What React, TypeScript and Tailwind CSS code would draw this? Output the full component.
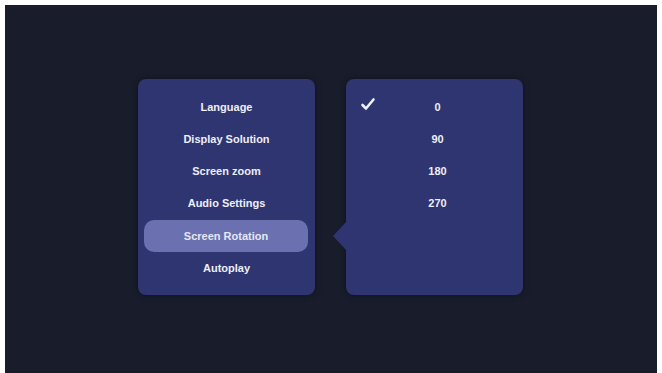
import React from "react";

const left = ["Language", "Display Solution", "Screen zoom", "Audio Settings", "Screen Rotation", "Autoplay"];
const right = ["0", "90", "180", "270"];

export default function App() {
  return (
    <div className="w-[662px] h-[373px] bg-white flex flex-col pt-[5px] pl-[5px] pr-[5px] overflow-hidden" style={{ fontFamily: '"Liberation Sans", Arial, sans-serif' }}>
      <div className="flex-1 bg-[#191c2b] flex items-start pl-[133px] pt-[74px] gap-[31px]">
        <div className="w-[177px] h-[216px] bg-[#2e3570] rounded-[8px] pt-[12px] flex flex-col shadow-[0_0_6px_rgba(0,0,0,0.4)]">
          {left.map((t, i) => (
            <div
              key={t}
              className={
                i === 4
                  ? "h-[32.2px] ml-[6px] mr-[7px] rounded-[10px] bg-[#6a70b0] flex items-center justify-center text-[11px] font-bold text-[#e6e7f2]"
                  : "h-[32.2px] flex items-center justify-center text-[11px] font-bold text-[#eeeef6]"
              }
            >
              {t}
            </div>
          ))}
        </div>
        <div className="relative w-[177px] h-[216px] bg-[#2e3570] rounded-[8px] pt-[12px] flex flex-col shadow-[0_0_6px_rgba(0,0,0,0.4)]">
          <div className="absolute left-[-13px] top-[143px] w-0 h-0 border-y-[14px] border-y-transparent border-r-[13px] border-r-[#2e3570]" />
          {right.map((t, i) => (
            <div key={t} className="relative h-[32.2px] flex items-center justify-center pl-[6px] text-[11px] font-bold text-[#eeeef6]">
              {i === 0 && (
                <svg className="absolute left-[14px] top-[6px]" width="16" height="14" viewBox="0 0 16 14">
                  <path d="M2.5 8 L6 11.5 L13.5 2.5" fill="none" stroke="#eef0f8" strokeWidth="2.6" strokeLinecap="round" strokeLinejoin="round" />
                </svg>
              )}
              {t}
            </div>
          ))}
        </div>
      </div>
    </div>
  );
}
